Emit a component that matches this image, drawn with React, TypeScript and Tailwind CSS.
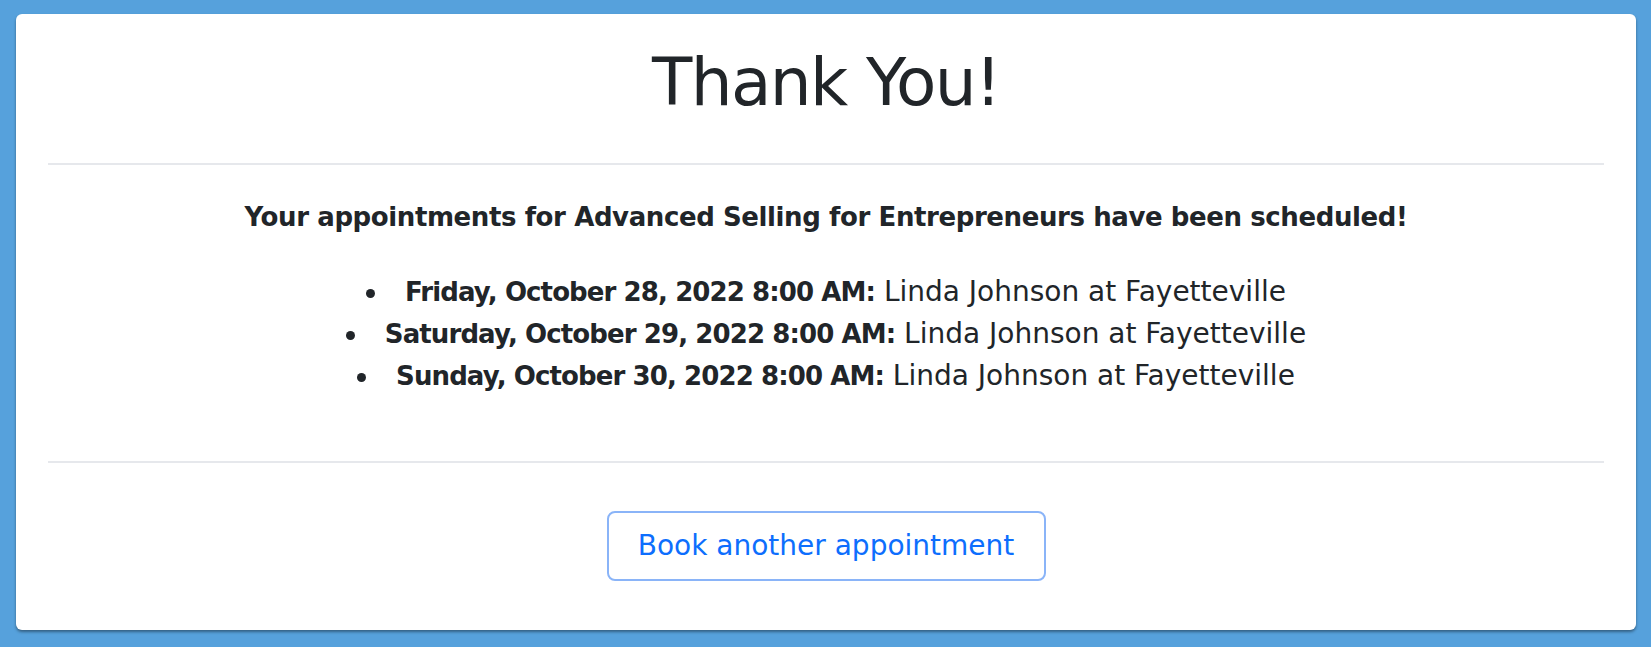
export default function App() {
  const appointments = [
    { date: 'Friday, October 28, 2022 8:00 AM:', rest: 'Linda Johnson at Fayetteville' },
    { date: 'Saturday, October 29, 2022 8:00 AM:', rest: 'Linda Johnson at Fayetteville' },
    { date: 'Sunday, October 30, 2022 8:00 AM:', rest: 'Linda Johnson at Fayetteville' },
  ];

  return (
    <div
      className="min-h-screen bg-[#56a1dc] pt-[14px] pl-[16px] pr-[15px] pb-[16px]"
      style={{ fontFamily: '"DejaVu Sans", "Liberation Sans", sans-serif' }}
    >
      <div className="bg-white rounded-[6px] shadow-[0_2px_3px_rgba(0,0,0,0.4)] px-[32px] pt-[27px] pb-[49px] text-[#212529]">
        {/* タイトル */}
        <h1 className="text-center text-[66px] leading-[84px] font-normal tracking-[-1.6px]">Thank You!</h1>

        <hr className="mt-[38px] border-0 h-[2px] bg-[#e6e8ec]" />

        {/* 予約内容 */}
        <p className="mt-[31px] text-center text-[26px] leading-[42px] font-bold tracking-[-0.4px]">
          Your appointments for Advanced Selling for Entrepreneurs have been scheduled!
        </p>

        <ul className="mt-[33px] text-[28px] leading-[42px]">
          {appointments.map((a) => (
            <li key={a.date} className="text-center">
              <span className="inline-block w-[9px] h-[9px] rounded-full bg-[#212529] mr-[30px] align-[3px]" />
              <strong className="font-bold text-[26px] tracking-[-0.9px]">{a.date}</strong> {a.rest}
            </li>
          ))}
        </ul>

        <hr className="mt-[64px] border-0 h-[2px] bg-[#e6e8ec]" />

        {/* ボタン */}
        <div className="mt-[48px] flex justify-center">
          <button className="w-[439px] h-[70px] rounded-[8px] border-2 border-[#8ab4f8] bg-white text-[#0d6efd] text-[28px]">
            Book another appointment
          </button>
        </div>
      </div>
    </div>
  );
}
